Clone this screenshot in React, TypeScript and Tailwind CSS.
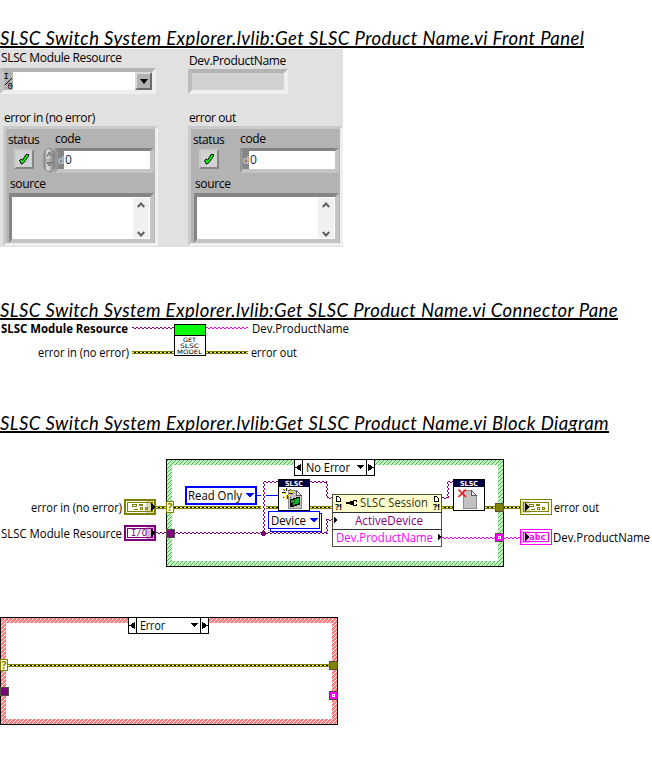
import React from "react";

type Box = { x: number; y: number };

const sans = "font-['Open_Sans','Noto_Sans',sans-serif]";

function Heading({ children, tracking }: { children: string; tracking: string }) {
  return (
    <h2 className={`h-[21px] w-max border-b-2 border-black whitespace-nowrap font-['Lato',sans-serif] text-[18.5px] leading-[22px] italic ${tracking}`}>
      {children}
    </h2>
  );
}

function Label({ children, className = "", tracking = "tracking-[-0.35px]" }: { children: string; className?: string; tracking?: string }) {
  return <div className={`${sans} text-[12px] leading-4 whitespace-nowrap ${tracking} ${className}`}>{children}</div>;
}

/* ---------- Front panel ---------- */

function Check() {
  return (
    <div className="flex h-[20px] w-[20px] items-center justify-center border-2 border-t-[#c8c8c8] border-r-[#858585] border-b-[#858585] border-l-[#c8c8c8] bg-[#d2d2d2]">
      <svg width="12" height="12" viewBox="0 0 12 12">
        <path d="M1.5 7.5 3.5 6l1 1.5L8 1.5h2.5V3L6 9.5l-2.5 1.7z" fill="#00ff00" stroke="#000" />
      </svg>
    </div>
  );
}

function Spinner() {
  return (
    <svg width="13" height="24" viewBox="0 0 13 24">
      <defs>
        <linearGradient id="knob" x1="0" x2="1">
          <stop offset="0" stopColor="#858585" />
          <stop offset=".35" stopColor="#dedede" />
          <stop offset="1" stopColor="#777" />
        </linearGradient>
      </defs>
      <rect x="1" y=".5" width="10.5" height="23" rx="5.2" fill="url(#knob)" stroke="#858585" />
      <path d="M1 12h11" stroke="#8b8b8b" />
      <path d="M4 8.5 6.3 4l2.4 4.5M4 14.5h4.7L6.3 18z" fill="#b4b4b4" stroke="#555" strokeWidth=".9" />
    </svg>
  );
}

function Cluster({ title, spinner }: { title: string; spinner?: boolean }) {
  return (
    <div className="w-[155px]">
      <Label className="h-[16px] pl-[1px]" tracking="tracking-[-0.42px]">{title}</Label>
      <div className="h-[120px] w-[155px] border-3 border-t-[#cacaca] border-r-[#efefef] border-b-[#efefef] border-l-[#cacaca] bg-[#b3b3b3]">
        <div className="flex h-[19px] pt-[2px]">
          <Label className="w-[49px] pt-[1px] pl-[2px]" tracking="tracking-[-0.45px]">status</Label>
          <Label>code</Label>
        </div>
        <div className="flex h-[25px]">
          <div className="w-[37px] pt-[1px] pl-[8px]">
            <Check />
          </div>
          <div className="w-[12px]">{spinner && <Spinner />}</div>
          <div className="flex h-[25px] w-[99px] border-t-3 border-r-4 border-b-4 border-l-3 border-t-[#858585] border-r-[#c4c4c4] border-b-[#c4c4c4] border-l-[#969696] bg-white">
            <span className={`${sans} h-full w-[6px] bg-[#858585] text-[10px] leading-[18px] text-[#ddd]`}>d</span>
            <span className={`${sans} pl-[1px] text-[12px] leading-[18px] text-[#102b48]`}>0</span>
          </div>
        </div>
        <Label className="h-[20px] pt-[3px] pl-[4px]">source</Label>
        <div className="ml-[3px] flex h-[50px] w-[145px] justify-end border-t-4 border-r-4 border-b-4 border-l-3 border-t-[#858585] border-r-[#c4c4c4] border-b-[#c4c4c4] border-l-[#858585] bg-white">
          <div className="mt-px mr-px flex h-[40px] w-[16px] flex-col items-center justify-between bg-[#f0f0f0] pt-[4px] pb-[1px]">
            <svg width="8" height="6" viewBox="0 0 8 6">
              <path d="M.8 5 4 1.5 7.2 5" fill="none" stroke="#606060" strokeWidth="2" />
            </svg>
            <svg width="8" height="6" viewBox="0 0 8 6">
              <path d="M.8 1 4 4.5 7.2 1" fill="none" stroke="#606060" strokeWidth="2" />
            </svg>
          </div>
        </div>
      </div>
    </div>
  );
}

function FrontPanel() {
  return (
    <div className="flex h-[198px] w-[343px] overflow-hidden bg-[#e1e1e1]">
      <div className="w-[188px]">
        <Label className="h-[19px] pt-[1px] pl-[1px]">SLSC Module Resource</Label>
        <div className="flex h-[26px] w-[156px] border-4 border-t-[#b4b4b4] border-r-[#efefef] border-b-[#efefef] border-l-[#c4c4c4] bg-white">
          <svg width="9" height="18" viewBox="0 0 9 18" className="shrink-0 bg-[#b3b3b3]">
            <text x="-.5" y="7" fontFamily="Liberation Mono" fontSize="9">I</text>
            <text x="3.5" y="17" fontFamily="Liberation Mono" fontSize="9">0</text>
            <path d="m1 13 7-7" stroke="#000" />
          </svg>
          <div className="flex-1" />
          <div className="flex w-[17px] items-center justify-center border-2 border-t-[#dadada] border-r-[#6b6b6b] border-b-[#6b6b6b] border-l-[#dadada] bg-[#b3b3b3]">
            <svg width="8" height="5" viewBox="0 0 8 5">
              <path d="M0 0h8L4 5z" />
            </svg>
          </div>
        </div>
        <div className="pt-[16px] pl-[3px]">
          <Cluster title="error in (no error)" spinner />
        </div>
      </div>
      <div className="w-[155px]">
        <Label className="h-[20px] pt-[4px] pl-[1px]">Dev.ProductName</Label>
        <div className="h-[25px] w-[100px] border-4 border-t-[#b4b4b4] border-r-[#efefef] border-b-[#efefef] border-l-[#bcbcbc] bg-[#d2d2d2]" />
        <div className="pt-[16px]">
          <Cluster title="error out" />
        </div>
      </div>
    </div>
  );
}

/* ---------- Diagram parts ---------- */

function T({ x, y, w, children, fill = "#000", bold, size = 12, font = "Open Sans" }: Box & {
  w: number; children: string; fill?: string; bold?: boolean; size?: number; font?: string;
}) {
  return (
    <text x={x} y={y} textLength={w} lengthAdjust="spacingAndGlyphs" fontFamily={`${font}, sans-serif`} fontSize={size} fontWeight={bold ? 700 : 400} fill={fill}>
      {children}
    </text>
  );
}

function Patterns() {
  return (
    <defs>
      <pattern id="err" width="4" height="3" patternUnits="userSpaceOnUse">
        <path d="M0 0h4v3H0z" fill="#808000" />
        <path d="M0 1h4v1H0z" fill="#000" />
        <path d="M0 1h2v1H0z" fill="#ffff40" />
      </pattern>
      <pattern id="green" width="4" height="4" patternUnits="userSpaceOnUse">
        <path d="M0 0h4v4H0z" fill="#b4ffb4" />
        <path d="M3 0h1v1H3zM2 1h1v1H2zM1 2h1v1H1zM0 3h1v1H0z" fill="#749474" />
      </pattern>
      <pattern id="red" width="4" height="4" patternUnits="userSpaceOnUse">
        <path d="M0 0h4v4H0z" fill="#ff7c7c" />
        <path d="M3 0h1v1H3zM2 1h1v1H2zM1 2h1v1H1zM0 3h1v1H0z" fill="#fff" />
      </pattern>
    </defs>
  );
}

function ErrWire({ x, y, w }: Box & { w: number }) {
  return (
    <g transform={`translate(${x} ${y})`}>
      <rect width={w} height="3" fill="url(#err)" />
    </g>
  );
}

/* Stepped wire: alternates between two pixel rows every two pixels. */
function Wave({ x, y, len, color, vertical }: Box & { len: number; color: string; vertical?: boolean }) {
  let d = "";
  for (let i = 0; i < len; i += 2) {
    const o = (i / 2) % 2;
    const n = Math.min(2, len - i);
    d += vertical ? `M${x + o} ${y + i}h1v${n}h-1z` : `M${x + i} ${y + o}h${n}v1h-${n}z`;
  }
  return <path d={d} fill={color} />;
}

function Frame({ x, y, pattern }: Box & { pattern: string }) {
  return (
    <g>
      <rect x={x} y={y} width="338" height="108" fill="#000" />
      <rect x={x + 1} y={y + 1} width="336" height="106" fill={pattern} />
      <rect x={x + 6} y={y + 6} width="326" height="96" fill="#fff" />
    </g>
  );
}

function Selector({ x, y, text, tx, w }: Box & { text: string; tx: number; w: number }) {
  return (
    <g>
      <rect x={x + 0.5} y={y + 0.5} width="80" height="16" fill="#fff" stroke="#000" />
      <path d={`M${x + 8.5} ${y}v17M${x + 72.5} ${y}v17`} stroke="#000" />
      <path d={`M${x + 7} ${y + 5}v7l-6-3.5zM${x + 74} ${y + 5}v7l6-3.5zM${x + 62} ${y + 6}h8l-4 4z`} />
      <T x={tx} y={y + 13} w={w}>{text}</T>
    </g>
  );
}

function Tunnel({ x, y, fill, dot }: Box & { fill: string; dot?: boolean }) {
  return (
    <g>
      <rect x={x + 0.5} y={y + 0.5} width="8" height="8" fill={fill} stroke="#505040" />
      {dot && <rect x={x + 3} y={y + 3} width="3" height="3" fill="#fff" />}
      {dot && <rect x={x + 4} y={y + 4} width="1" height="1" fill={fill} />}
    </g>
  );
}

function Question({ x, y }: Box) {
  return (
    <g>
      <rect x={x + 0.5} y={y + 0.5} width="7" height="11" fill="#ffffcc" stroke="#808000" />
      <T x={x + 1.5} y={y + 10} w={5} size={10} bold fill="#808000">?</T>
    </g>
  );
}

function Terminal({ x, y, color, kind, out }: Box & { color: string; kind: "cluster" | "I/O" | "abc"; out?: boolean }) {
  return (
    <g transform={`translate(${x} ${y})`}>
      <rect x={out ? 0.5 : 1} y={out ? 0.5 : 1} width={out ? 31 : 30} height={out ? 15 : 14} fill="#fff" stroke={color} strokeWidth={out ? 1 : 2} />
      <rect x="3.5" y="3.5" width="25" height="9" fill="#fff" stroke={color} />
      {kind === "cluster" && (
        <g transform={out ? "translate(1 0)" : undefined} fill="none" stroke={color}>
          <path d="M8.5 5.5h4v2h-4zM15.5 5.5h3v1h-3zM10 10.5h4M16.5 8.5h2v2h-2zM21.5 8.5h2v2h-2z" />
        </g>
      )}
      {kind === "I/O" && <T x={7} y={11} w={16} size={9} font="DejaVu Sans Mono" fill={color}>I/O</T>}
      {kind === "abc" && <T x={9} y={11} w={17} size={9} font="DejaVu Sans Mono" bold fill={color}>abc</T>}
      <rect x={out ? 1 : 22} y="2" width="9" height="12" fill={color} opacity=".3" />
      <path d={out ? "M5 4v8l4-4z" : "M27 4v8l4-4z"} />
    </g>
  );
}

function SlscIcon({ x, y, close }: Box & { close?: boolean }) {
  return (
    <g transform={`translate(${x} ${y})`}>
      <rect x=".5" y=".5" width="31" height="31" fill="#fff" stroke="#000" />
      <rect x="1" y="1" width="30" height="7" fill="#000040" />
      <T x={7} y={7} w={18} size={7} font="DejaVu Sans" bold fill="#fff">SLSC</T>
      <path d="M10.5 11.5h8l5 5v13h-13z" fill="#c2c2c2" stroke="#8c8c8c" />
      <path d="M18.5 11.5v5h5z" fill="#eee" stroke="#555" />
      {close ? (
        <path d="m5.5 10.5 7.5 7.5M13 10.5 5.5 18" stroke="#f01818" strokeWidth="1.7" shapeRendering="auto" />
      ) : (
        <g>
          <path d="M8 9h1v3H8zM9 16h1v4H9zM4 13h4v1H4zM11 14h4v1h-4zM5 10h1v1H5zM6 11h1v1H6zM12 10h1v1h-1zM11 11h1v1h-1zM5 18h1v1H5zM12 18h1v1h-1z" fill="#222" />
          <path d="M9 9h1v3H9zM8 16h1v4H8zM4 14h4v1H4zM11 13h4v1h-4zM6 10h1v1H6zM7 11h1v1H7zM13 11h-1v1h1zM11 12h1v1h-1zM6 17h1v1H6zM7 16h1v1H7zM11 17h1v1h-1zM10 16h1v1h-1z" fill="#ffe800" />
          <path d="M12 20h3v-1h3v-1h4v8h-3v1h-3v1h-4z" fill="#111" />
          <path d="M13 21h3v-1h3v-1h2v5h-1v1h-3v1h-2v-2h-2z" fill="#18b030" />
          <path d="M16 20h1v4h-1zM13 23h2v1h-2z" fill="#0a5a1a" />
        </g>
      )}
    </g>
  );
}

function NodeGlyph({ x }: { x: number }) {
  return (
    <g>
      <path d={`M${x + 0.5} 496.5h2l2 2v3h-4z`} fill="#fff" stroke="#000" />
      <T x={x - 1} y={510} w={7} size={8} bold>?!</T>
    </g>
  );
}

function ConnectorPane() {
  const p = "#800080";
  return (
    <svg className="block" width="652" height="42" viewBox="0 320 652 42" shapeRendering="crispEdges">
      <Patterns />
      <T x={1} y={333} w={127} bold>SLSC Module Resource</T>
      <T x={38} y={357} w={91}>error in (no error)</T>
      <Wave x={132} y={327} len={42} color={p} />
      <Wave x={206} y={327} len={42} color="#ff00ff" />
      <ErrWire x={132} y={351} w={42} />
      <ErrWire x={206} y={351} w={42} />
      <rect x="174.5" y="324.5" width="31" height="31" fill="#fff" stroke="#000" />
      <rect x="175" y="325" width="30" height="10" fill="#00ff00" />
      <path d="M174 335.5h32" stroke="#000" />
      <T x={183} y={342} w={13} size={6} font="DejaVu Sans">GET</T>
      <T x={180} y={348} w={19} size={6} font="DejaVu Sans">SLSC</T>
      <T x={177} y={354} w={25} size={6} font="DejaVu Sans">MODEL</T>
      <T x={252} y={333} w={97}>Dev.ProductName</T>
      <T x={251} y={357} w={46}>error out</T>
    </svg>
  );
}

function BlockDiagram() {
  const p = "#800080";
  const m = "#ff00ff";
  const o = "#808000";
  return (
    <svg className="block" width="652" height="275" viewBox="0 450 652 275" shapeRendering="crispEdges">
      <Frame x={166} y={459} pattern="url(#green)" />
      <Selector x={294} y={459} text="No Error" tx={306} w={44} />

      <T x={31} y={512} w={91}>error in (no error)</T>
      <T x={1} y={538} w={121}>SLSC Module Resource</T>
      <Terminal x={124} y={499} color={o} kind="cluster" />
      <Terminal x={124} y={525} color={p} kind="I/O" />

      <ErrWire x={156} y={506} w={105} />
      <ErrWire x={266} y={506} w={66} />
      <ErrWire x={442} y={506} w={12} />
      <ErrWire x={485} y={506} w={35} />
      <path d="M257 495.5h4M266 495.5h12" stroke="#0000ff" />
      <Wave x={156} y={532} len={172} color={p} />
      <Wave x={263} y={482} len={51} color={p} vertical />
      <Wave x={264} y={481} len={15} color={p} />
      <Wave x={310} y={481} len={17} color={p} />
      <Wave x={326} y={482} len={16} color={p} vertical />
      <Wave x={327} y={497} len={6} color={p} />
      <Wave x={326} y={519} len={14} color={p} vertical />
      <Wave x={327} y={519} len={6} color={p} />
      <Wave x={442} y={497} len={6} color={p} />
      <Wave x={447} y={482} len={16} color={p} vertical />
      <Wave x={448} y={481} len={6} color={p} />
      <Wave x={442} y={537} len={78} color={m} />
      <rect x="261" y="532" width="5" height="3" fill={p} />
      <rect x="262" y="531" width="3" height="5" fill={p} />

      <rect x="186" y="487" width="70" height="17" fill="#fff" stroke="#0000ff" strokeWidth="2" />
      <T x={188} y={500} w={54}>Read Only</T>
      <path d="M246 493h8l-4 5z" fill="#0000ff" />

      <rect x="270.5" y="513.5" width="51" height="18" fill="#fff" stroke="#0000ff" />
      <rect x="268.5" y="511.5" width="51" height="17" fill="#fff" stroke="#0000ff" />
      <T x={271} y={525} w={35}>Device</T>
      <path d="M310 518h8l-4 5z" fill="#0000ff" />
      <SlscIcon x={278} y={479} />
      <SlscIcon x={453} y={479} close />

      <rect x="332.5" y="494.5" width="109" height="52" fill="#fff" stroke="#505040" />
      <rect x="333" y="495" width="108" height="17" fill="#ffffcc" />
      <path d="M332 512.5h110M332 529.5h110" stroke="#303030" />
      <NodeGlyph x={336} />
      <NodeGlyph x={434} />
      <path d="M346 502h4v-1h3v4h-3v-1h-4zM353 500h4v2h-1v-1h-2v4h2v-1h1v2h-4z" />
      <T x={360} y={507} w={68} fill="#303020">SLSC Session</T>
      <T x={355} y={525} w={68} fill={p}>ActiveDevice</T>
      <T x={336} y={542} w={97} fill={m}>Dev.ProductName</T>
      <path d="M334 517v6l3-3zM438 534v6l3-3z" />

      <Question x={166} y={501} />
      <Tunnel x={166} y={529} fill={p} />
      <Tunnel x={495} y={503} fill={o} />
      <Tunnel x={495} y={533} fill={m} dot />
      <Terminal x={520} y={499} color={o} kind="cluster" out />
      <Terminal x={520} y={529} color={m} kind="abc" out />
      <T x={554} y={512} w={45}>error out</T>
      <T x={553} y={542} w={97}>Dev.ProductName</T>

      <Frame x={0} y={617} pattern="url(#red)" />
      <Selector x={128} y={617} text="Error" tx={140} w={25} />
      <ErrWire x={8} y={664} w={321} />
      <Question x={0} y={659} />
      <Tunnel x={0} y={687} fill={p} />
      <Tunnel x={329} y={661} fill={o} />
      <Tunnel x={329} y={691} fill={m} dot />
    </svg>
  );
}

export default function App() {
  return (
    <main className="h-[775px] w-[652px] overflow-hidden bg-white pt-[27px] text-black">
      <Heading tracking="tracking-[0.42px]">SLSC Switch System Explorer.lvlib:Get SLSC Product Name.vi Front Panel</Heading>
      <div className="pt-[1px]">
        <FrontPanel />
      </div>
      <div className="pt-[52px]">
        <Heading tracking="tracking-[0.39px]">SLSC Switch System Explorer.lvlib:Get SLSC Product Name.vi Connector Pane</Heading>
      </div>
      <ConnectorPane />
      <div className="pt-[50px]">
        <Heading tracking="tracking-[0.41px]">SLSC Switch System Explorer.lvlib:Get SLSC Product Name.vi Block Diagram</Heading>
      </div>
      <div className="pt-[17px]">
        <BlockDiagram />
      </div>
    </main>
  );
}
